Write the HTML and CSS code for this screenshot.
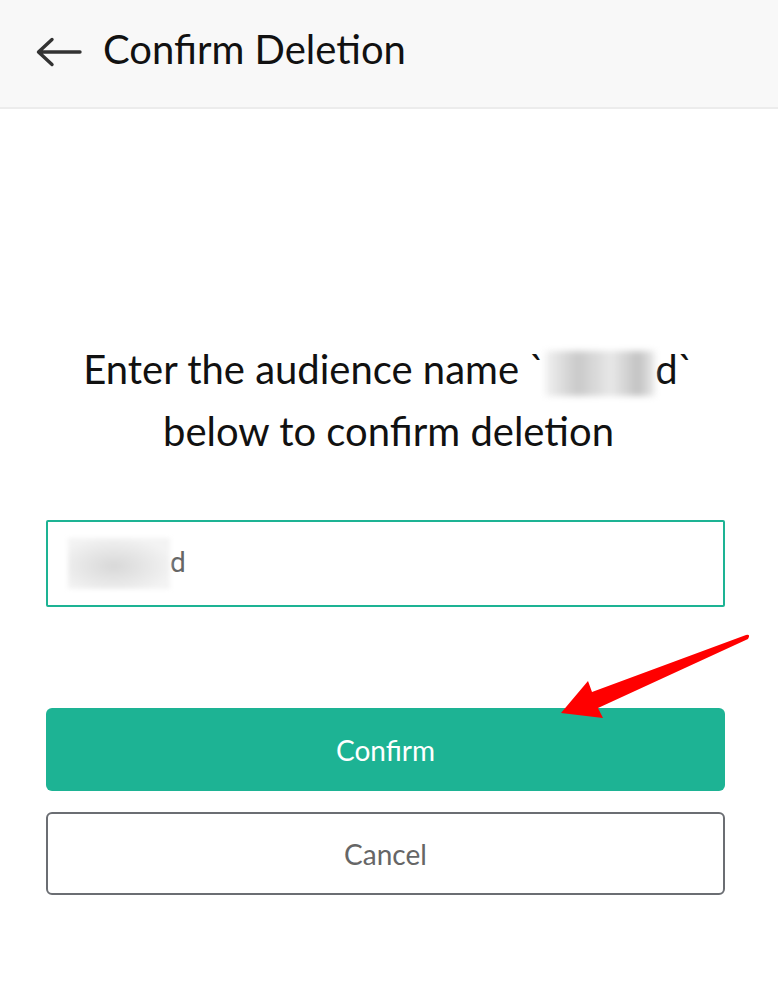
FILE: index.html
```html
<!DOCTYPE html>
<html lang="en">
<head>
  <meta charset="UTF-8" />
  <title>Confirm Deletion</title>
  <link rel="stylesheet" href="styles.css">
</head>
<body>
  <div class="header">
    <svg class="back" width="46" height="32" viewBox="0 0 46 32">
      <path d="M44 16 H3 M16 3.5 L2.5 16 L16 28.5" fill="none" stroke="#333" stroke-width="3.4" stroke-linecap="round" stroke-linejoin="round"/>
    </svg>
    <h1>Confirm Deletion</h1>
  </div>

  <div class="content">
    <h2>Enter the audience name `<span class="blur blur-title"></span>d`<br>below to confirm deletion</h2>

    <div class="field">
      <span class="blur blur-input"></span><span class="value">d</span>
    </div>

    <button class="btn btn-confirm">Confirm</button>
    <button class="btn btn-cancel">Cancel</button>
  </div>

  <svg class="pointer" width="238" height="110" viewBox="0 0 238 110">
    <path d="M21 93 L48 61 L52 72 L206 15 Q211 14 208 19 L58 88 L63 98 Z" fill="#f00"/>
  </svg>
</body>
</html>
```

FILE: styles.css
```css
body { margin: 0; font-family: Lato, "Open Sans", sans-serif; background: #fff; color: #111; position: relative; }
.header { height: 107px; background: #f8f8f8; border-bottom: 2px solid #ececec; display: flex; align-items: center; padding-left: 36px; }
.back { margin-right: 21px; margin-top: -4px; }
h1 { font-weight: 400; font-size: 40px; margin: 0; margin-top: -10px; color: #111; }
.content { padding: 229px 53px 0 46px; display: flex; flex-direction: column; }
h2 { font-weight: 400; font-size: 40px; line-height: 62px; text-align: center; margin: 0 0 58px 0; padding: 0 4px 0 10px; color: #111; }
.blur { display: inline-block; background: linear-gradient(90deg, #f2f2f2, #c9c9c9 30%, #e8e8e8 60%, #c2c2c2 85%, #ececec); filter: blur(3px); }
.blur-title { width: 110px; height: 45px; vertical-align: -12px; }
.field { height: 83px; border: 2px solid #1db394; border-radius: 2px; display: flex; align-items: center; padding-left: 20px; font-size: 28px; color: #666; font-family: Roboto, sans-serif; }
.blur-input { width: 102px; height: 51px; background: radial-gradient(ellipse at 45% 55%, #d8d8d8, #f3f3f3 75%); filter: blur(2px); }
.value { margin-top: -2px; }
.btn { display: block; width: 100%; font-family: Lato, sans-serif; font-size: 28px; border-radius: 6px; cursor: pointer; }
.btn-confirm { height: 83px; margin-top: 101px; background: #1db394; color: #fff; border: none; }
.btn-cancel { height: 83px; margin-top: 21px; background: #fff; color: #666; border: 2px solid #6b6e73; }
.pointer { position: absolute; left: 540px; top: 620px; }
```
